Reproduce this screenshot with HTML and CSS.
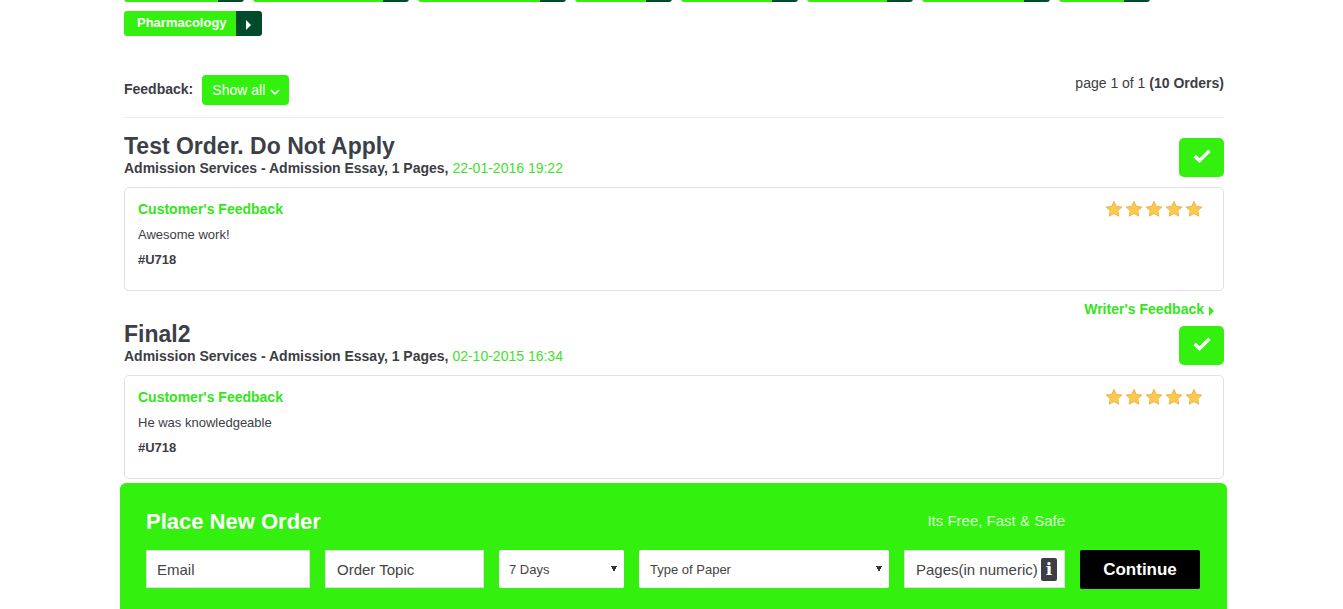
FILE: index.html
```html
<!DOCTYPE html>
<html lang="en">
<head>
<meta charset="utf-8">
<title>Orders</title>
<link rel="stylesheet" href="styles.css">
</head>
<body>
<main class="page">
  <div class="tags">
    <a class="tag"><span class="tag-label w1"></span><span class="tag-arrow"><i class="tri"></i></span></a>
    <a class="tag"><span class="tag-label w2"></span><span class="tag-arrow"><i class="tri"></i></span></a>
    <a class="tag"><span class="tag-label w3"></span><span class="tag-arrow"><i class="tri"></i></span></a>
    <a class="tag"><span class="tag-label w4"></span><span class="tag-arrow"><i class="tri"></i></span></a>
    <a class="tag"><span class="tag-label w5"></span><span class="tag-arrow"><i class="tri"></i></span></a>
    <a class="tag"><span class="tag-label w6"></span><span class="tag-arrow"><i class="tri"></i></span></a>
    <a class="tag"><span class="tag-label w7"></span><span class="tag-arrow"><i class="tri"></i></span></a>
    <a class="tag"><span class="tag-label w8"></span><span class="tag-arrow"><i class="tri"></i></span></a>
    <a class="tag"><span class="tag-label">Pharmacology</span><span class="tag-arrow"><i class="tri"></i></span></a>
  </div>

  <div class="filter-bar">
    <div class="filter">
      <span class="filter-label">Feedback:</span>
      <button class="show-all" type="button">Show all
        <svg class="chev" viewBox="0 0 10 6" width="10" height="6"><path d="M1 1l4 4 4-4" fill="none" stroke="#fff" stroke-width="1.6"/></svg>
      </button>
    </div>
    <div class="paging">page 1 of 1 <b>(10 Orders)</b></div>
  </div>

  <article class="order">
    <div class="order-head">
      <div class="order-text">
        <h2 class="order-title">Test Order. Do Not Apply</h2>
        <p class="order-meta">Admission Services - Admission Essay, 1 Pages, <span class="date">22-01-2016 19:22</span></p>
      </div>
      <span class="check"><svg viewBox="0 0 18 14" width="18" height="14"><path d="M1.6 7l4.9 4.6L16.4 1.8" fill="none" stroke="#fff" stroke-width="3.4"/></svg></span>
    </div>
    <section class="card">
      <div class="card-top">
        <h3 class="card-title">Customer's Feedback</h3>
        <div class="stars">
          <svg class="star" viewBox="0 0 20 20"><path d="M10 1.5l2.6 5.6 6.1.7-4.5 4.2 1.2 6-5.4-3-5.4 3 1.2-6-4.5-4.2 6.1-.7z"/></svg>
          <svg class="star" viewBox="0 0 20 20"><path d="M10 1.5l2.6 5.6 6.1.7-4.5 4.2 1.2 6-5.4-3-5.4 3 1.2-6-4.5-4.2 6.1-.7z"/></svg>
          <svg class="star" viewBox="0 0 20 20"><path d="M10 1.5l2.6 5.6 6.1.7-4.5 4.2 1.2 6-5.4-3-5.4 3 1.2-6-4.5-4.2 6.1-.7z"/></svg>
          <svg class="star" viewBox="0 0 20 20"><path d="M10 1.5l2.6 5.6 6.1.7-4.5 4.2 1.2 6-5.4-3-5.4 3 1.2-6-4.5-4.2 6.1-.7z"/></svg>
          <svg class="star" viewBox="0 0 20 20"><path d="M10 1.5l2.6 5.6 6.1.7-4.5 4.2 1.2 6-5.4-3-5.4 3 1.2-6-4.5-4.2 6.1-.7z"/></svg>
        </div>
      </div>
      <p class="card-text">Awesome work!</p>
      <p class="card-id">#U718</p>
    </section>
    <div class="writer"><a class="writer-link">Writer's Feedback<i class="tri tri-green"></i></a></div>
  </article>

  <article class="order">
    <div class="order-head">
      <div class="order-text">
        <h2 class="order-title">Final2</h2>
        <p class="order-meta">Admission Services - Admission Essay, 1 Pages, <span class="date">02-10-2015 16:34</span></p>
      </div>
      <span class="check"><svg viewBox="0 0 18 14" width="18" height="14"><path d="M1.6 7l4.9 4.6L16.4 1.8" fill="none" stroke="#fff" stroke-width="3.4"/></svg></span>
    </div>
    <section class="card">
      <div class="card-top">
        <h3 class="card-title">Customer's Feedback</h3>
        <div class="stars">
          <svg class="star" viewBox="0 0 20 20"><path d="M10 1.5l2.6 5.6 6.1.7-4.5 4.2 1.2 6-5.4-3-5.4 3 1.2-6-4.5-4.2 6.1-.7z"/></svg>
          <svg class="star" viewBox="0 0 20 20"><path d="M10 1.5l2.6 5.6 6.1.7-4.5 4.2 1.2 6-5.4-3-5.4 3 1.2-6-4.5-4.2 6.1-.7z"/></svg>
          <svg class="star" viewBox="0 0 20 20"><path d="M10 1.5l2.6 5.6 6.1.7-4.5 4.2 1.2 6-5.4-3-5.4 3 1.2-6-4.5-4.2 6.1-.7z"/></svg>
          <svg class="star" viewBox="0 0 20 20"><path d="M10 1.5l2.6 5.6 6.1.7-4.5 4.2 1.2 6-5.4-3-5.4 3 1.2-6-4.5-4.2 6.1-.7z"/></svg>
          <svg class="star" viewBox="0 0 20 20"><path d="M10 1.5l2.6 5.6 6.1.7-4.5 4.2 1.2 6-5.4-3-5.4 3 1.2-6-4.5-4.2 6.1-.7z"/></svg>
        </div>
      </div>
      <p class="card-text">He was knowledgeable</p>
      <p class="card-id">#U718</p>
    </section>
  </article>
</main>

<aside class="order-bar">
  <div class="bar-head">
    <h2 class="bar-title">Place New Order</h2>
    <span class="bar-note">Its Free, Fast &amp; Safe</span>
  </div>
  <form class="bar-form">
    <input class="field f-email" type="text" placeholder="Email">
    <input class="field f-topic" type="text" placeholder="Order Topic">
    <select class="pick f-days"><option>7 Days</option></select>
    <select class="pick f-type"><option>Type of Paper</option></select>
    <div class="pages">
      <input class="field f-pages" type="text" placeholder="Pages(in numeric)">
      <span class="info">i</span>
    </div>
    <button class="continue" type="button">Continue</button>
  </form>
</aside>
</body>
</html>
```

FILE: styles.css
```css
* { box-sizing: border-box; }
html, body { margin: 0; height: 100%; overflow: hidden; }
body { background: #fff; color: #3c3d45; font-family: "Liberation Sans", Arial, sans-serif; }
.page { width: 1100px; margin: -23px 0 0 124px; }

.tags { display: flex; flex-wrap: wrap; gap: 9px 9px; }
.tag { display: flex; height: 25px; border-radius: 3px; overflow: hidden; color: #fff; font-size: 13px; font-weight: 700; }
.tag-label { background: #33f00f; padding: 0 9px 0 13px; line-height: 24px; white-space: nowrap; overflow: hidden; }
.w1 { width: 94px; } .w2 { width: 130px; } .w3 { width: 122px; } .w4 { width: 71px; }
.w5 { width: 91px; } .w6 { width: 80px; } .w7 { width: 102px; } .w8 { width: 65px; }
.tag-arrow { width: 26px; background: #004c2a; display: flex; align-items: center; justify-content: center; padding-top: 2px; }
.tri { display: inline-block; width: 0; height: 0; border-left: 5px solid #fff; border-top: 5px solid transparent; border-bottom: 5px solid transparent; }
.tri-green { border-left-color: #33f00f; margin-left: 5px; vertical-align: -2px; }

.filter-bar { display: flex; justify-content: space-between; margin-top: 39px; height: 43px; border-bottom: 1px solid #eee; }
.filter { display: flex; align-items: flex-start; gap: 9px; }
.filter-label { font-size: 14px; font-weight: 700; line-height: 28px; }
.show-all { width: 87px; height: 30px; border: 0; border-radius: 4px; background: #33f00f; color: #fff; font: 14px "Liberation Sans", Arial, sans-serif; padding: 0 0 0 1px; }
.chev { margin-left: 1px; vertical-align: 0; }
.paging { font-size: 14px; line-height: 16px; }

.order-head { display: flex; justify-content: space-between; align-items: flex-end; height: 44px; margin-top: 15px; }
.order-text { align-self: flex-start; }
.order-title { margin: 0; font-size: 23px; line-height: 27px; font-weight: 700; color: #3c3f47; }
.order-meta { margin: 0; font-size: 14px; line-height: 16px; font-weight: 700; }
.date { font-weight: 400; color: #44e02c; }
.check { width: 45px; height: 39px; border-radius: 5px; background: #33f00f; display: flex; align-items: center; justify-content: center; padding-bottom: 3px; }

.card { margin-top: 10px; height: 104px; border: 1px solid #e2e2e2; border-radius: 5px; padding: 13px 13px 0; }
.card-top { display: flex; justify-content: space-between; }
.card-title { margin: 0; font-size: 14px; line-height: 16px; color: #33e51a; font-weight: 700; }
.stars { display: flex; width: 105px; gap: 2px; margin-top: -1px; }
.star { width: 18px; height: 18px; fill: #fdc84e; stroke: #eab042; stroke-width: 1; }
.card-text { margin: 9px 0 0; font-size: 13px; line-height: 16px; }
.card-id { margin: 9px 0 0; font-size: 13px; line-height: 16px; font-weight: 700; }

.writer { display: flex; justify-content: flex-end; padding: 10px 10px 0 0; height: 30px; }
.writer-link { font-size: 14px; line-height: 16px; font-weight: 700; color: #33e51a; }
.order + .order .order-head { margin-top: 0; }

.order-bar { position: fixed; left: 120px; bottom: 0; width: 1107px; height: 126px; background: #33f00f; border-radius: 6px 6px 0 0; padding: 26px 27px 0 26px; }
.bar-head { display: flex; justify-content: space-between; align-items: center; height: 26px; padding-right: 135px; }
.bar-title { margin: 0; font-size: 22px; line-height: 26px; font-weight: 700; color: #fff; }
.bar-note { font-size: 15px; color: #d9ffd0; padding-bottom: 4px; }
.bar-form { display: flex; align-items: flex-start; gap: 15px; margin-top: 15px; }
.field { height: 38px; border: 1px solid #ddd; background: #fff; font: 15px "Liberation Sans", Arial, sans-serif; padding: 0 10px; color: #444; border-radius: 0; outline: 0; }
.field::placeholder { color: #444; opacity: 1; }
.f-email { width: 164px; }
.f-topic { width: 159px; padding-left: 11px; }
.pick { height: 38px; border: 0; border-radius: 2px; font: 13px "Liberation Sans", Arial, sans-serif; color: #444; padding: 0 10px; appearance: none; background-color: #fff; background-repeat: no-repeat; background-size: 3px 6px; background-image: linear-gradient(to top right, transparent 50%, #333 50%), linear-gradient(to top left, transparent 50%, #333 50%); background-position: right 10px center, right 7px center; }
.f-days { width: 125px; }
.f-type { width: 250px; padding-left: 11px; }
.pages { position: relative; width: 161px; }
.f-pages { width: 100%; padding: 0 0 0 11px; }
.info { position: absolute; right: 8px; top: 8px; width: 16px; height: 23px; border-radius: 2px; background: #3c3d45; color: #fff; font: 700 17px/23px "DejaVu Serif", serif; text-align: center; }
.continue { width: 120px; height: 39px; border: 0; border-radius: 2px; background: #000; color: #fff; font: 700 17px "Liberation Sans", Arial, sans-serif; padding: 0; }
```
